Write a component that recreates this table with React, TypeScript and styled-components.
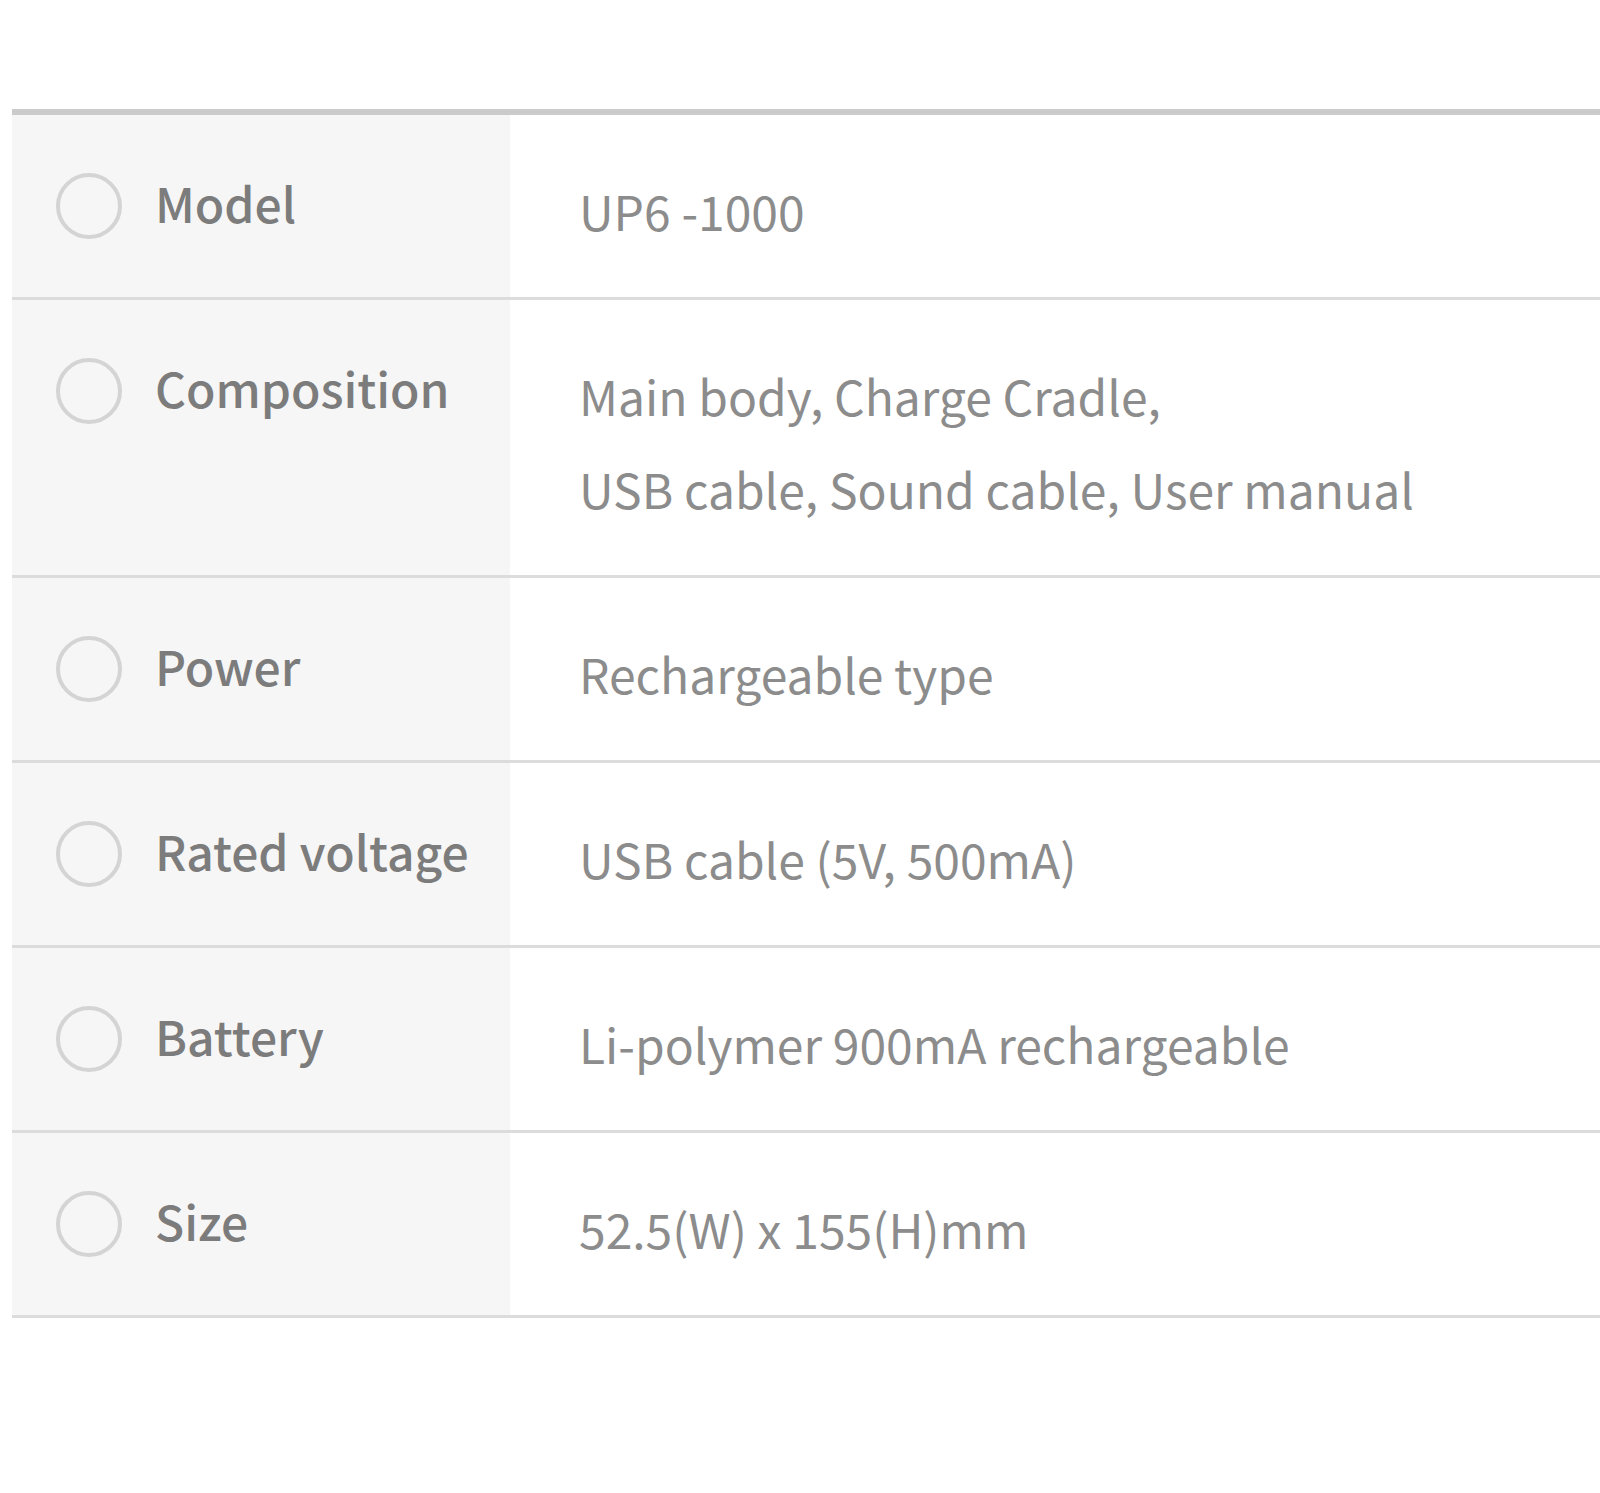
import React from 'react';
import styled, { createGlobalStyle } from 'styled-components';

interface SpecItem {
  label: string;
  lines: string[];
}

const specs: SpecItem[] = [
  { label: 'Model', lines: ['UP6 -1000'] },
  { label: 'Composition', lines: ['Main body, Charge Cradle,', 'USB cable, Sound cable, User manual'] },
  { label: 'Power', lines: ['Rechargeable type'] },
  { label: 'Rated voltage', lines: ['USB cable (5V, 500mA)'] },
  { label: 'Battery', lines: ['Li-polymer 900mA rechargeable'] },
  { label: 'Size', lines: ['52.5(W) x 155(H)mm'] },
];

const GlobalStyle = createGlobalStyle`
  html, body {
    margin: 0;
    padding: 0;
    background: #ffffff;
  }
  body {
    font-family: "Noto Sans CJK KR", "Noto Sans", sans-serif;
  }
`;

const Page = styled.div`
  width: 1600px;
  min-height: 1493px;
  padding: 109px 0 0 12px;
  box-sizing: border-box;
`;

const Table = styled.div`
  display: flex;
  flex-direction: column;
  border-top: 6px solid #cbcbcb;
`;

const Row = styled.div`
  display: grid;
  grid-template-columns: 498px 1fr;
  border-bottom: 3px solid #dcdcdc;
`;

const LabelCell = styled.div`
  background: #f6f6f6;
  display: flex;
  align-items: flex-start;
  gap: 33px;
  padding: 42px 0 0 44px;
`;

const Circle = styled.span`
  flex: none;
  width: 58px;
  height: 58px;
  margin-top: 16px;
  border: 4px solid #d4d4d4;
  border-radius: 50%;
`;

const LabelText = styled.span`
  font-size: 48px;
  font-weight: 500;
  line-height: 90px;
  color: #7c7c7c;
  white-space: nowrap;
`;

const ValueCell = styled.div`
  padding: 49px 0 40px 69px;
  display: flex;
  flex-direction: column;
`;

const ValueLine = styled.span`
  font-size: 48px;
  font-weight: 400;
  line-height: 93px;
  color: #8c8c8c;
  white-space: nowrap;
`;

export default function App() {
  return (
    <>
      <GlobalStyle />
      <Page>
        <Table>
          {specs.map((item) => (
            <Row key={item.label}>
              <LabelCell>
                <Circle />
                <LabelText>{item.label}</LabelText>
              </LabelCell>
              <ValueCell>
                {item.lines.map((line) => (
                  <ValueLine key={line}>{line}</ValueLine>
                ))}
              </ValueCell>
            </Row>
          ))}
        </Table>
      </Page>
    </>
  );
}
